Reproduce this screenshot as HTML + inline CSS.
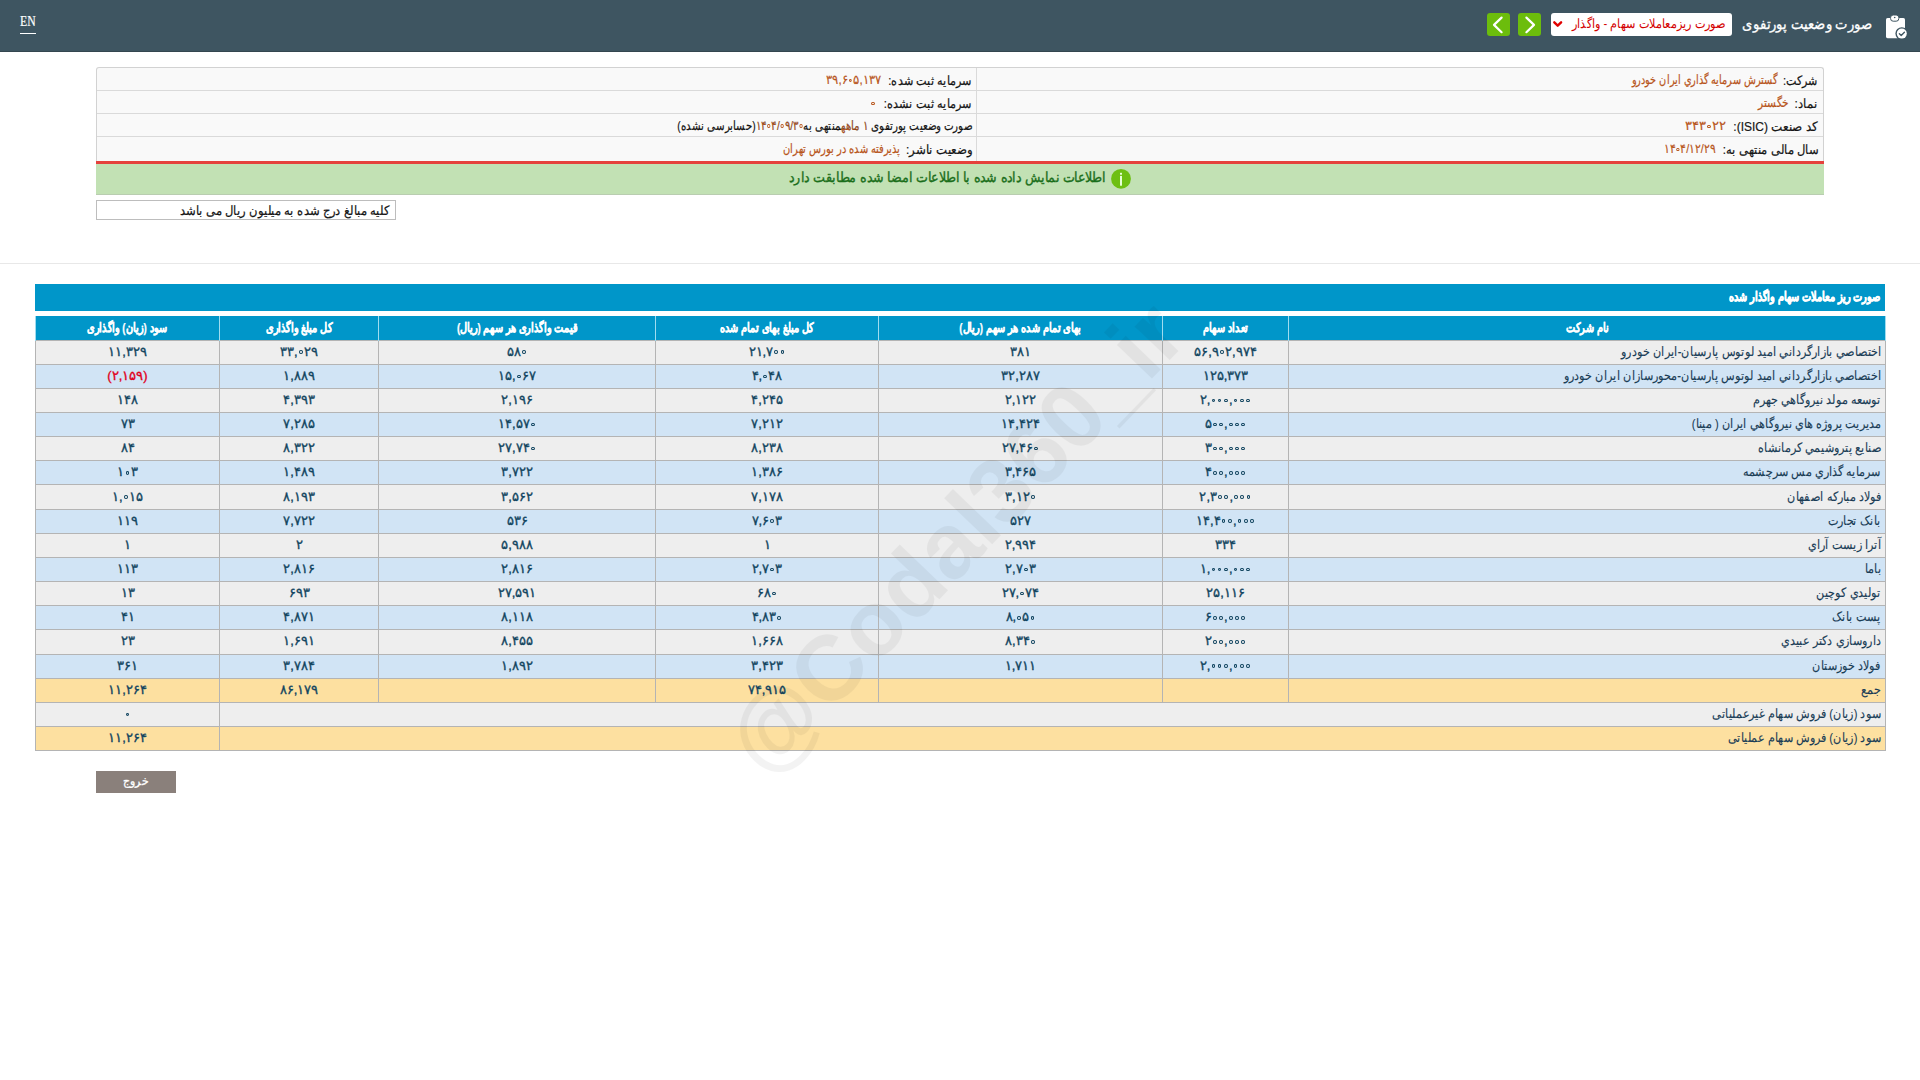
<!DOCTYPE html>
<html lang="fa" dir="rtl">
<head>
<meta charset="utf-8">
<style>
*{box-sizing:border-box;margin:0;padding:0}
html,body{width:1920px;height:1080px;overflow:hidden;background:#fff;font-family:"Liberation Sans",sans-serif;}
.abs{position:absolute}
.sx{display:inline-block;white-space:nowrap}
.tx{position:absolute;white-space:nowrap;line-height:16px}
#hdr{position:absolute;left:0;top:0;width:1920px;height:52px;background:#3e5561;border-bottom:1px solid #34464f}
#en{left:20px;top:14px;color:#fff;font-family:"Liberation Serif",serif;font-size:13.6px;direction:ltr;line-height:16px;transform:scaleX(0.86);transform-origin:left center;-webkit-text-stroke:0.2px #fff}
#en-u{left:20px;top:33px;width:16px;height:1.4px;background:#fff}
#sel{left:1551px;top:13px;width:181px;height:23px;background:#fff;border-radius:3px}
.gbtn{top:13px;width:23px;height:23px;background:#6cbd0c;border-radius:3px}
#info{left:96px;top:67px;width:1728px;height:94px;background:#f9f9f9;border:1px solid #d2d2d2;border-bottom:none;border-radius:3px 3px 0 0}
.irow{position:absolute;left:0;width:1726px;height:1px;background:#dadada}
.lab{color:#151515;font-size:13px}
.val{color:#b8561c;font-size:13px}
#red{left:96px;top:161px;width:1728px;height:3px;background:#e5413c}
#green{left:96px;top:164px;width:1728px;height:31px;background:#c2e1b4;border-bottom:1px solid #b9cdb0}
#sep{left:0;top:263px;width:1920px;height:1px;background:#e8e8e8}
#note{left:96px;top:200px;width:300px;height:20px;border:1px solid #bdbdbd;background:#fff}
#ttl{left:35px;top:284px;width:1850px;height:27px;background:#0096c9}
#tbl{position:absolute;left:35px;top:316px;border-collapse:collapse;table-layout:fixed;width:1850px}
#tbl th{background:#0096c9;color:#fff;font-weight:bold;font-size:13px;-webkit-text-stroke:0.25px #fff;height:24px;border-left:1px solid #9fdcf0;border-right:1px solid #9fdcf0;white-space:nowrap;text-align:center;overflow:hidden}
#tbl td{height:24.17px;border:1px solid #b4b4b4;font-size:13px;color:#124560;-webkit-text-stroke-width:0.35px;white-space:nowrap;text-align:center;padding:0 4px 2px;overflow:hidden}
#tbl td.n{text-align:right;-webkit-text-stroke-width:0.12px;color:#1a3d56}
#tbl tr.o td{background:#eeeeee}
#tbl tr.e td{background:#d1e4f5}
#tbl tr.s td{background:#fde0a0}
#tbl td.neg{color:#e0001b}
.nm{direction:ltr;unicode-bidi:isolate;display:inline-block}
.z{display:inline-block;width:6.2px;height:8px;position:relative;vertical-align:baseline}
.z:after{content:"";position:absolute;left:1.2px;bottom:1.8px;width:3.6px;height:3.4px;border:1.3px solid currentColor;border-radius:50%;box-sizing:border-box}
#exit{left:96px;top:771px;width:80px;height:22px;background:#8a807b}
#wm{left:954.5px;top:536.5px;width:0;height:0}
#wm span{position:absolute;left:0;top:0;transform:translate(-50%,-50%) rotate(-46.1deg);font-family:"Liberation Sans",sans-serif;font-size:92px;font-weight:bold;color:#000;opacity:0.042;white-space:nowrap;direction:ltr;line-height:1}
</style>
</head>
<body>
<div id="hdr">
  <div class="abs" id="en">EN</div>
  <div class="abs" id="en-u"></div>
  <div class="abs" id="sel"></div>
  <div class="abs gbtn" style="left:1487px"></div>
  <div class="abs gbtn" style="left:1518px"></div>
  <svg class="abs" style="left:0;top:0" width="1920" height="52" viewBox="0 0 1920 52">
    <polyline points="1501.6,17.6 1494,24.9 1501.6,32.2" fill="none" stroke="#fff" stroke-width="2.2" stroke-linecap="round" stroke-linejoin="round"/>
    <polyline points="1526.4,17.6 1534,24.9 1526.4,32.2" fill="none" stroke="#fff" stroke-width="2.2" stroke-linecap="round" stroke-linejoin="round"/>
    <polyline points="1554.3,22.3 1557.7,25.7 1561.1,22.3" fill="none" stroke="#e00000" stroke-width="2.4" stroke-linecap="round" stroke-linejoin="round"/>
    <rect x="1886" y="18" width="19" height="20.2" rx="1.6" fill="#fff"/>
    <rect x="1890.6" y="15" width="8.2" height="6.2" rx="2.6" fill="#fff" stroke="#3e5561" stroke-width="1"/>
    <circle cx="1894.7" cy="17.5" r="0.8" fill="#3e5561"/>
    <circle cx="1901.8" cy="33.6" r="6.4" fill="#3e5561"/>
    <circle cx="1901.8" cy="33.6" r="5" fill="#fff"/>
    <polyline points="1899.4,33.8 1901.2,35.4 1904.4,32.3" fill="none" stroke="#3e5561" stroke-width="1.4" stroke-linecap="round" stroke-linejoin="round"/>
  </svg>
</div>
<div class="abs" id="info">
  <div class="irow" style="top:22px"></div>
  <div class="irow" style="top:45px"></div>
  <div class="irow" style="top:68px"></div>
  <div class="abs" style="left:879px;top:0;width:1px;height:93px;background:#dadada"></div>
</div>
<div class="abs" id="red"></div>
<div class="abs" id="green"></div>
<svg class="abs" style="left:1100px;top:164px" width="40" height="30" viewBox="1100 164 40 30">
  <circle cx="1121" cy="178.8" r="9.9" fill="#6dbf12"/>
  <rect x="1120" y="172.8" width="2" height="1.9" fill="#e6ffd6"/>
  <rect x="1120" y="175.9" width="2" height="9.8" fill="#e6ffd6"/>
</svg>
<div class="abs" id="note"></div>
<div class="abs" id="sep"></div>
<div class="abs" id="ttl"></div>
<table id="tbl">
<colgroup><col style="width:597px"><col style="width:126px"><col style="width:284px"><col style="width:223px"><col style="width:277px"><col style="width:159px"><col style="width:184px"></colgroup>
<tr class="h"><th><span class="sx" style="transform:scaleX(0.75);transform-origin:center center;">نام شرکت</span></th><th><span class="sx" style="transform:scaleX(0.75);transform-origin:center center;">تعداد سهام</span></th><th><span class="sx" style="transform:scaleX(0.75);transform-origin:center center;">بهای تمام شده هر سهم (ریال)</span></th><th><span class="sx" style="transform:scaleX(0.75);transform-origin:center center;">کل مبلغ بهای تمام شده</span></th><th><span class="sx" style="transform:scaleX(0.75);transform-origin:center center;">قیمت واگذاری هر سهم (ریال)</span></th><th><span class="sx" style="transform:scaleX(0.75);transform-origin:center center;">کل مبلغ واگذاری</span></th><th><span class="sx" style="transform:scaleX(0.75);transform-origin:center center;">سود (زیان) واگذاری</span></th></tr>
<tr class="o"><td class="n"><span class="sx" style="transform:scaleX(0.86);transform-origin:right center;">اختصاصي بازارگرداني اميد لوتوس پارسيان-ايران خودرو</span></td><td><span class="nm">۵۶,۹<i class="z"></i>۲,۹۷۴</span></td><td><span class="nm">۳۸۱</span></td><td><span class="nm">۲۱,۷<i class="z"></i><i class="z"></i></span></td><td><span class="nm">۵۸<i class="z"></i></span></td><td><span class="nm">۳۳,<i class="z"></i>۲۹</span></td><td><span class="nm">۱۱,۳۲۹</span></td></tr>
<tr class="e"><td class="n"><span class="sx" style="transform:scaleX(0.86);transform-origin:right center;">اختصاصي بازارگرداني اميد لوتوس پارسيان-محورسازان ايران خودرو</span></td><td><span class="nm">۱۲۵,۳۷۳</span></td><td><span class="nm">۳۲,۲۸۷</span></td><td><span class="nm">۴,<i class="z"></i>۴۸</span></td><td><span class="nm">۱۵,<i class="z"></i>۶۷</span></td><td><span class="nm">۱,۸۸۹</span></td><td class="neg"><span class="nm">(۲,۱۵۹)</span></td></tr>
<tr class="o"><td class="n"><span class="sx" style="transform:scaleX(0.86);transform-origin:right center;">توسعه مولد نيروگاهي جهرم</span></td><td><span class="nm">۲,<i class="z"></i><i class="z"></i><i class="z"></i>,<i class="z"></i><i class="z"></i><i class="z"></i></span></td><td><span class="nm">۲,۱۲۲</span></td><td><span class="nm">۴,۲۴۵</span></td><td><span class="nm">۲,۱۹۶</span></td><td><span class="nm">۴,۳۹۳</span></td><td><span class="nm">۱۴۸</span></td></tr>
<tr class="e"><td class="n"><span class="sx" style="transform:scaleX(0.86);transform-origin:right center;">مديريت پروژه هاي نيروگاهي ايران ( مپنا)</span></td><td><span class="nm">۵<i class="z"></i><i class="z"></i>,<i class="z"></i><i class="z"></i><i class="z"></i></span></td><td><span class="nm">۱۴,۴۲۴</span></td><td><span class="nm">۷,۲۱۲</span></td><td><span class="nm">۱۴,۵۷<i class="z"></i></span></td><td><span class="nm">۷,۲۸۵</span></td><td><span class="nm">۷۳</span></td></tr>
<tr class="o"><td class="n"><span class="sx" style="transform:scaleX(0.86);transform-origin:right center;">صنايع پتروشيمي كرمانشاه</span></td><td><span class="nm">۳<i class="z"></i><i class="z"></i>,<i class="z"></i><i class="z"></i><i class="z"></i></span></td><td><span class="nm">۲۷,۴۶<i class="z"></i></span></td><td><span class="nm">۸,۲۳۸</span></td><td><span class="nm">۲۷,۷۴<i class="z"></i></span></td><td><span class="nm">۸,۳۲۲</span></td><td><span class="nm">۸۴</span></td></tr>
<tr class="e"><td class="n"><span class="sx" style="transform:scaleX(0.86);transform-origin:right center;">سرمايه گذاري مس سرچشمه</span></td><td><span class="nm">۴<i class="z"></i><i class="z"></i>,<i class="z"></i><i class="z"></i><i class="z"></i></span></td><td><span class="nm">۳,۴۶۵</span></td><td><span class="nm">۱,۳۸۶</span></td><td><span class="nm">۳,۷۲۲</span></td><td><span class="nm">۱,۴۸۹</span></td><td><span class="nm">۱<i class="z"></i>۳</span></td></tr>
<tr class="o"><td class="n"><span class="sx" style="transform:scaleX(0.86);transform-origin:right center;">فولاد مباركه اصفهان</span></td><td><span class="nm">۲,۳<i class="z"></i><i class="z"></i>,<i class="z"></i><i class="z"></i><i class="z"></i></span></td><td><span class="nm">۳,۱۲<i class="z"></i></span></td><td><span class="nm">۷,۱۷۸</span></td><td><span class="nm">۳,۵۶۲</span></td><td><span class="nm">۸,۱۹۳</span></td><td><span class="nm">۱,<i class="z"></i>۱۵</span></td></tr>
<tr class="e"><td class="n"><span class="sx" style="transform:scaleX(0.86);transform-origin:right center;">بانک تجارت</span></td><td><span class="nm">۱۴,۴<i class="z"></i><i class="z"></i>,<i class="z"></i><i class="z"></i><i class="z"></i></span></td><td><span class="nm">۵۲۷</span></td><td><span class="nm">۷,۶<i class="z"></i>۳</span></td><td><span class="nm">۵۳۶</span></td><td><span class="nm">۷,۷۲۲</span></td><td><span class="nm">۱۱۹</span></td></tr>
<tr class="o"><td class="n"><span class="sx" style="transform:scaleX(0.86);transform-origin:right center;">آترا زيست آراي</span></td><td><span class="nm">۳۳۴</span></td><td><span class="nm">۲,۹۹۴</span></td><td><span class="nm">۱</span></td><td><span class="nm">۵,۹۸۸</span></td><td><span class="nm">۲</span></td><td><span class="nm">۱</span></td></tr>
<tr class="e"><td class="n"><span class="sx" style="transform:scaleX(0.86);transform-origin:right center;">باما</span></td><td><span class="nm">۱,<i class="z"></i><i class="z"></i><i class="z"></i>,<i class="z"></i><i class="z"></i><i class="z"></i></span></td><td><span class="nm">۲,۷<i class="z"></i>۳</span></td><td><span class="nm">۲,۷<i class="z"></i>۳</span></td><td><span class="nm">۲,۸۱۶</span></td><td><span class="nm">۲,۸۱۶</span></td><td><span class="nm">۱۱۳</span></td></tr>
<tr class="o"><td class="n"><span class="sx" style="transform:scaleX(0.86);transform-origin:right center;">توليدي كوچين</span></td><td><span class="nm">۲۵,۱۱۶</span></td><td><span class="nm">۲۷,<i class="z"></i>۷۴</span></td><td><span class="nm">۶۸<i class="z"></i></span></td><td><span class="nm">۲۷,۵۹۱</span></td><td><span class="nm">۶۹۳</span></td><td><span class="nm">۱۳</span></td></tr>
<tr class="e"><td class="n"><span class="sx" style="transform:scaleX(0.86);transform-origin:right center;">پست بانک</span></td><td><span class="nm">۶<i class="z"></i><i class="z"></i>,<i class="z"></i><i class="z"></i><i class="z"></i></span></td><td><span class="nm">۸,<i class="z"></i>۵<i class="z"></i></span></td><td><span class="nm">۴,۸۳<i class="z"></i></span></td><td><span class="nm">۸,۱۱۸</span></td><td><span class="nm">۴,۸۷۱</span></td><td><span class="nm">۴۱</span></td></tr>
<tr class="o"><td class="n"><span class="sx" style="transform:scaleX(0.86);transform-origin:right center;">داروسازي دكتر عبيدي</span></td><td><span class="nm">۲<i class="z"></i><i class="z"></i>,<i class="z"></i><i class="z"></i><i class="z"></i></span></td><td><span class="nm">۸,۳۴<i class="z"></i></span></td><td><span class="nm">۱,۶۶۸</span></td><td><span class="nm">۸,۴۵۵</span></td><td><span class="nm">۱,۶۹۱</span></td><td><span class="nm">۲۳</span></td></tr>
<tr class="e"><td class="n"><span class="sx" style="transform:scaleX(0.86);transform-origin:right center;">فولاد خوزستان</span></td><td><span class="nm">۲,<i class="z"></i><i class="z"></i><i class="z"></i>,<i class="z"></i><i class="z"></i><i class="z"></i></span></td><td><span class="nm">۱,۷۱۱</span></td><td><span class="nm">۳,۴۲۳</span></td><td><span class="nm">۱,۸۹۲</span></td><td><span class="nm">۳,۷۸۴</span></td><td><span class="nm">۳۶۱</span></td></tr>
<tr class="s"><td class="n"><span class="sx" style="transform:scaleX(0.86);transform-origin:right center;">جمع</span></td><td></td><td></td><td><span class="nm">۷۴,۹۱۵</span></td><td></td><td><span class="nm">۸۶,۱۷۹</span></td><td><span class="nm">۱۱,۲۶۴</span></td></tr>
<tr class="o"><td class="n" colspan="6"><span class="sx" style="transform:scaleX(0.86);transform-origin:right center;">سود (زيان) فروش سهام غيرعملياتی</span></td><td><span class="nm"><i class="z"></i></span></td></tr>
<tr class="s"><td class="n" colspan="6"><span class="sx" style="transform:scaleX(0.86);transform-origin:right center;">سود (زيان) فروش سهام عملياتی</span></td><td><span class="nm">۱۱,۲۶۴</span></td></tr>
</table>
<div class="abs" id="exit"></div>
<div class="tx" id="t_title" style="right:48.0px;top:15.5px;color:#fff;font-size:15px;-webkit-text-stroke:0.3px #fff;"><span class="sx" style="transform:scaleX(0.878);transform-origin:right center">صورت وضعیت پورتفوی</span></div>
<div class="tx" id="t_seltx" style="right:194.0px;top:15.5px;color:#d40000;font-size:13px;"><span class="sx" style="transform:scaleX(0.866);transform-origin:right center">صورت ریزمعاملات سهام - واگذار</span></div>
<div class="tx" id="t_r1l" style="right:102.0px;top:73px;color:#151515;font-size:13px;-webkit-text-stroke:0.2px #151515;"><span class="sx" style="transform:scaleX(0.854);transform-origin:right center">شرکت:</span></div>
<div class="tx" id="t_r1v" style="right:142.5px;top:71.7px;color:#b8561c;font-size:13px;-webkit-text-stroke:0.2px #b8561c;"><span class="sx" style="transform:scaleX(0.750);transform-origin:right center">گسترش سرمايه گذاري ايران خودرو</span></div>
<div class="tx" id="t_r2l" style="right:102.0px;top:96px;color:#151515;font-size:13px;-webkit-text-stroke:0.2px #151515;"><span class="sx" style="transform:scaleX(0.900);transform-origin:right center">نماد:</span></div>
<div class="tx" id="t_r2v" style="right:131.0px;top:94.7px;color:#b8561c;font-size:13px;-webkit-text-stroke:0.2px #b8561c;"><span class="sx" style="transform:scaleX(0.816);transform-origin:right center">خگستر</span></div>
<div class="tx" id="t_r3l" style="right:102.0px;top:119px;color:#151515;font-size:13px;-webkit-text-stroke:0.2px #151515;"><span class="sx" style="transform:scaleX(0.920);transform-origin:right center">کد صنعت (ISIC):</span></div>
<div class="tx" id="t_r3v" style="right:193.5px;top:117.7px;color:#b8561c;font-size:13px;-webkit-text-stroke:0.2px #b8561c;"><span class="sx" style="transform:scaleX(1.002);transform-origin:right center"><span class="nm">۳۴۳<i class="z"></i>۲۲</span></span></div>
<div class="tx" id="t_r4l" style="right:102.0px;top:142px;color:#151515;font-size:13px;-webkit-text-stroke:0.2px #151515;"><span class="sx" style="transform:scaleX(0.890);transform-origin:right center">سال مالی منتهی به:</span></div>
<div class="tx" id="t_r4v" style="right:204.2px;top:140.7px;color:#b8561c;font-size:13px;-webkit-text-stroke:0.2px #b8561c;"><span class="sx" style="transform:scaleX(0.827);transform-origin:right center"><span class="nm">۱۴<i class="z"></i>۴/۱۲/۲۹</span></span></div>
<div class="tx" id="t_l1l" style="right:948.0px;top:73px;color:#151515;font-size:13px;-webkit-text-stroke:0.2px #151515;"><span class="sx" style="transform:scaleX(0.862);transform-origin:right center">سرمایه ثبت شده:</span></div>
<div class="tx" id="t_l1v" style="right:1039.0px;top:71.7px;color:#b8561c;font-size:13px;-webkit-text-stroke:0.2px #b8561c;"><span class="sx" style="transform:scaleX(0.889);transform-origin:right center"><span class="nm">۳۹,۶<i class="z"></i>۵,۱۳۷</span></span></div>
<div class="tx" id="t_l2l" style="right:948.0px;top:96px;color:#151515;font-size:13px;-webkit-text-stroke:0.2px #151515;"><span class="sx" style="transform:scaleX(0.864);transform-origin:right center">سرمایه ثبت نشده:</span></div>
<div class="tx" id="t_l2v" style="right:1044.0px;top:94.7px;color:#b8561c;font-size:13px;-webkit-text-stroke:0.2px #b8561c;"><span class="sx" style="transform:scaleX(1.000);transform-origin:right center"><span class="nm"><i class="z"></i></span></span></div>
<div class="tx" id="t_l3" style="right:948.0px;top:117.5px;color:#151515;font-size:13px;-webkit-text-stroke:0.2px #151515;"><span class="sx" style="transform:scaleX(0.788);transform-origin:right center">صورت وضعیت پورتفوی <span style='color:#b8561c'>۱ ماهه</span>منتهی به<span class='nm' style='color:#b8561c'>۱۴<i class='z'></i>۴/<i class='z'></i>۹/۳<i class='z'></i></span>(حسابرسی نشده)</span></div>
<div class="tx" id="t_l4l" style="right:948.0px;top:142px;color:#151515;font-size:13px;-webkit-text-stroke:0.2px #151515;"><span class="sx" style="transform:scaleX(0.905);transform-origin:right center">وضعیت ناشر:</span></div>
<div class="tx" id="t_l4v" style="right:1020.0px;top:140.7px;color:#b8561c;font-size:13px;-webkit-text-stroke:0.2px #b8561c;"><span class="sx" style="transform:scaleX(0.763);transform-origin:right center">پذیرفته شده در بورس تهران</span></div>
<div class="tx" id="t_gtx" style="right:814.0px;top:169px;color:#1a6e1a;font-size:14px;-webkit-text-stroke:0.35px #1a6e1a;"><span class="sx" style="transform:scaleX(0.903);transform-origin:right center">اطلاعات نمایش داده شده با اطلاعات امضا شده مطابقت دارد</span></div>
<div class="tx" id="t_note" style="right:1531.0px;top:203px;color:#151515;font-size:13px;-webkit-text-stroke:0.2px #151515;"><span class="sx" style="transform:scaleX(0.891);transform-origin:right center">کلیه مبالغ درج شده به میلیون ریال می باشد</span></div>
<div class="tx" id="t_ttl" style="right:40.0px;top:289px;color:#fff;font-size:13px;font-weight:bold;-webkit-text-stroke:0.55px #fff;"><span class="sx" style="transform:scaleX(0.749);transform-origin:right center">صورت ریز معاملات سهام واگذار شده</span></div>
<div class="tx" id="t_exit" style="right:1771.8px;top:773px;color:#fff;font-size:12px;-webkit-text-stroke:0.3px #fff;"><span class="sx" style="transform:scaleX(0.907);transform-origin:right center">خروج</span></div>
<div class="abs" id="wm"><span>@Codal360_ir</span></div>
</body>
</html>
